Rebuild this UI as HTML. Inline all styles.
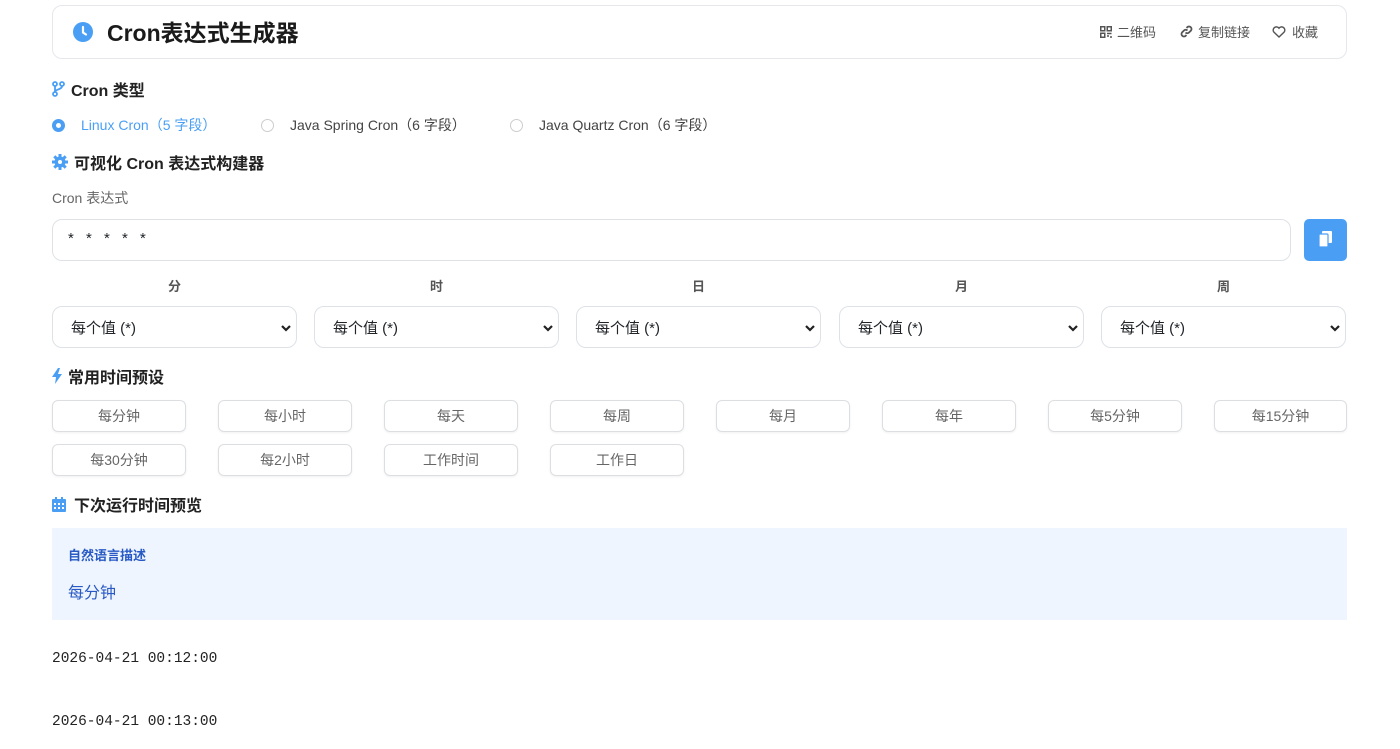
<!DOCTYPE html>
<html><head><meta charset="utf-8"><style>
*{box-sizing:border-box;margin:0;padding:0}
body{width:1400px;height:749px;overflow:hidden;background:#fff;font-family:"Liberation Sans","Noto Sans CJK SC",sans-serif;color:#212529;position:relative}
.a{position:absolute}
.card{left:52px;top:5px;width:1295px;height:54px;border:1px solid #e5e7eb;border-radius:10px}
.h{font-weight:bold;font-size:16px;color:#222;display:flex;align-items:center;gap:6px}
.radio{font-size:14px;color:#444;display:flex;align-items:center}
.rc{width:13px;height:13px;border:1px solid #ccc;border-radius:50%;margin-right:16px}
.sel{width:245px;height:42px;border:1px solid #dee2e6;border-radius:10px;top:306px;font-size:15px;color:#212529;padding:10px 0 0 18px}
.sel svg{position:absolute;right:4px;top:15px}
.lab{top:276px;width:245px;text-align:center;font-size:13px;font-weight:bold;color:#555}
.btn{width:134px;height:32px;border:1px solid #dcdee1;border-radius:6px;font-size:14px;color:#666;text-align:center;line-height:30px;box-shadow:0 1px 2px rgba(0,0,0,.06)}
.mono{font-family:"Liberation Mono",monospace;font-size:14.5px;color:#222;left:52px}
</style></head><body>
<div class="a card"></div>
<svg class="a" style="left:73px;top:22px" width="20" height="20" viewBox="0 0 20 20"><circle cx="10" cy="10" r="10" fill="#4a9ff5"/><path d="M10 5v5.5l3 2" stroke="#fff" stroke-width="2.2" fill="none" stroke-linecap="round"/></svg>
<div class="a" style="left:107px;top:14px;font-size:23px;font-weight:bold;color:#1a1a1a">Cron表达式生成器</div>
<div class="a" style="left:1100px;top:22px;font-size:13px;color:#555;display:flex;align-items:center">
<svg width="12" height="12" viewBox="0 0 12 12" fill="none" stroke="#555" stroke-width="1.5"><rect x="0.75" y="0.75" width="4" height="4"/><rect x="7.25" y="0.75" width="4" height="4"/><rect x="0.75" y="7.25" width="4" height="4"/><path d="M7 7.5h4.5M7 10h2M11 10v2"/></svg>
<span style="margin-left:5px">二维码</span>
<svg style="margin-left:24px" width="13" height="13" viewBox="0 0 13 13" fill="none" stroke="#555" stroke-width="1.8"><path d="M5.5 7.5a2.5 2.5 0 0 0 3.5 0l2-2a2.5 2.5 0 0 0-3.5-3.5l-1 1"/><path d="M7.5 5.5a2.5 2.5 0 0 0-3.5 0l-2 2a2.5 2.5 0 0 0 3.5 3.5l1-1"/></svg><span style="margin-left:5px">复制链接</span>
<svg style="margin-left:22px" width="14" height="12" viewBox="0 0 14 12" fill="none" stroke="#555" stroke-width="1.4"><path d="M7 11L1.8 6A3 3 0 0 1 7 2.2 3 3 0 0 1 12.2 6z"/></svg><span style="margin-left:6px">收藏</span></div>

<div class="a h" style="left:52px;top:77px"><svg width="13" height="16" viewBox="0 0 13 16" fill="none" stroke="#4a9ff5" stroke-width="1.8"><circle cx="3" cy="3" r="2"/><circle cx="3" cy="13" r="2"/><circle cx="10" cy="3" r="2"/><path d="M3 5v6M10 5c0 4-7 3-7 6"/></svg>Cron 类型</div>
<div class="a radio" style="left:52px;top:115px;color:#4a9ff5"><div class="rc" style="border:4px solid #4a9ff5"></div>Linux Cron（5 字段）</div>
<div class="a radio" style="left:261px;top:115px"><div class="rc"></div>Java Spring Cron（6 字段）</div>
<div class="a radio" style="left:510px;top:115px"><div class="rc"></div>Java Quartz Cron（6 字段）</div>

<div class="a h" style="left:52px;top:150px"><svg width="16" height="16" viewBox="0 0 16 16"><circle cx="8" cy="8" r="5.5" fill="#4a9ff5"/><g stroke="#4a9ff5" stroke-width="3"><path d="M8 0v16M0 8h16M2.3 2.3l11.4 11.4M13.7 2.3L2.3 13.7"/></g><circle cx="8" cy="8" r="2" fill="#fff"/></svg>可视化 Cron 表达式构建器</div>
<div class="a" style="left:52px;top:188px;font-size:14px;color:#666">Cron 表达式</div>
<div class="a" style="left:52px;top:219px;width:1239px;height:42px;border:1px solid #dee2e6;border-radius:10px;padding:10px 0 0 15px;font-size:15px;letter-spacing:4px">* * * * *</div>
<div class="a" style="left:1304px;top:219px;width:43px;height:42px;background:#4a9ff5;border-radius:5px"><svg class="a" style="left:15px;top:12px" width="13" height="16" viewBox="0 0 13 16" fill="#fff"><rect x="3" y="0" width="10" height="12" rx="1"/><rect x="0" y="3" width="9" height="13" rx="1" stroke="#4a9ff5" stroke-width="1.2"/></svg></div>

<div class="a lab" style="left:52px">分</div><div class="a lab" style="left:314px">时</div><div class="a lab" style="left:576px">日</div><div class="a lab" style="left:839px">月</div><div class="a lab" style="left:1101px">周</div>
<div class="a sel" style="left:52px">每个值 (*)<svg width="12" height="12" viewBox="0 0 12 12"><path d="M2 4l4 4 4-4" stroke="#222" stroke-width="2.2" fill="none"/></svg></div>
<div class="a sel" style="left:314px">每个值 (*)<svg width="12" height="12" viewBox="0 0 12 12"><path d="M2 4l4 4 4-4" stroke="#222" stroke-width="2.2" fill="none"/></svg></div>
<div class="a sel" style="left:576px">每个值 (*)<svg width="12" height="12" viewBox="0 0 12 12"><path d="M2 4l4 4 4-4" stroke="#222" stroke-width="2.2" fill="none"/></svg></div>
<div class="a sel" style="left:839px">每个值 (*)<svg width="12" height="12" viewBox="0 0 12 12"><path d="M2 4l4 4 4-4" stroke="#222" stroke-width="2.2" fill="none"/></svg></div>
<div class="a sel" style="left:1101px">每个值 (*)<svg width="12" height="12" viewBox="0 0 12 12"><path d="M2 4l4 4 4-4" stroke="#222" stroke-width="2.2" fill="none"/></svg></div>

<div class="a h" style="left:52px;top:364px"><svg width="10" height="16" viewBox="0 0 10 16"><path d="M6 0L0 9h4l-1 7 7-10H6l2-6z" fill="#4a9ff5"/></svg>常用时间预设</div>
<div class="a btn" style="left:52px;top:400px">每分钟</div>
<div class="a btn" style="left:218px;top:400px">每小时</div>
<div class="a btn" style="left:384px;top:400px">每天</div>
<div class="a btn" style="left:550px;top:400px">每周</div>
<div class="a btn" style="left:716px;top:400px">每月</div>
<div class="a btn" style="left:882px;top:400px">每年</div>
<div class="a btn" style="left:1048px;top:400px">每5分钟</div>
<div class="a btn" style="left:1214px;top:400px;width:133px">每15分钟</div>
<div class="a btn" style="left:52px;top:444px">每30分钟</div>
<div class="a btn" style="left:218px;top:444px">每2小时</div>
<div class="a btn" style="left:384px;top:444px">工作时间</div>
<div class="a btn" style="left:550px;top:444px">工作日</div>

<div class="a h" style="left:52px;top:492px;gap:8px"><svg width="14" height="15" viewBox="0 0 14 15" fill="#4a9ff5"><rect x="0" y="2" width="14" height="13" rx="1"/><rect x="3" y="0" width="2" height="3"/><rect x="9" y="0" width="2" height="3"/><g fill="#fff"><rect x="2" y="6" width="2" height="2"/><rect x="6" y="6" width="2" height="2"/><rect x="10" y="6" width="2" height="2"/><rect x="2" y="10" width="2" height="2"/><rect x="6" y="10" width="2" height="2"/><rect x="10" y="10" width="2" height="2"/></g></svg>下次运行时间预览</div>
<div class="a" style="left:52px;top:528px;width:1295px;height:92px;background:#eef5fe"></div>
<div class="a" style="left:68px;top:545px;font-size:13px;font-weight:bold;color:#2859c5">自然语言描述</div>
<div class="a" style="left:68px;top:579px;font-size:16px;color:#2859c5">每分钟</div>
<div class="a mono" style="top:651px">2026-04-21 00:12:00</div>
<div class="a mono" style="top:714px">2026-04-21 00:13:00</div>
</body></html>
